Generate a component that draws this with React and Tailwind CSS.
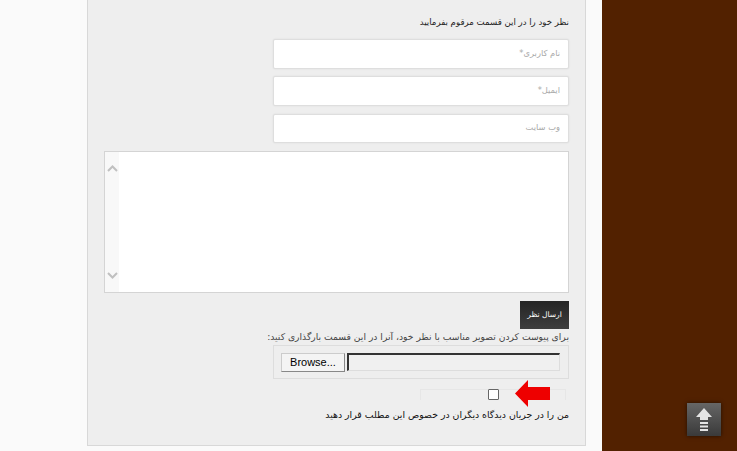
import React from "react";

function Field({ placeholder, mt, h }) {
  return (
    <input
      dir="rtl"
      placeholder={placeholder}
      className={`block ${mt} ${h} ml-auto w-[296px] bg-white border border-[#dedede] shadow-[0_0_2px_rgba(0,0,0,0.08)] rounded-[2px] px-2 pb-[3px] text-[8.3px] placeholder:text-[#aaaaaa] font-['DejaVu_Sans',sans-serif] outline-none`}
    />
  );
}

export default function App() {
  return (
    <div className="flex h-[451px] w-[737px] overflow-hidden font-['DejaVu_Sans',sans-serif]">
      <div className="w-[602px] h-full bg-[#fafafa] pl-[87px]">
        <div className="w-[499px] h-[446px] bg-[#eeeeee] border-x border-b border-[#d8d8d8] px-[16px]">
          <div dir="rtl" className="pt-[16px] h-[39px] text-[8.6px] leading-[12px] text-[#222222] whitespace-nowrap">
            نظر خود را در این قسمت مرقوم بفرمایید
          </div>
          <Field placeholder="نام کاربری*" mt="mt-0" h="h-[30px]" />
          <Field placeholder="ایمیل*" mt="mt-[7px]" h="h-[30px]" />
          <Field placeholder="وب سایت" mt="mt-[8px]" h="h-[29px]" />

          <div className="mt-[8px] flex w-[465px] h-[142px] bg-white border border-[#d4d4d4]">
            <div className="w-[14px] h-full bg-[#f8f8f8] flex flex-col items-center justify-between pt-[13px] pb-[13px]">
              <svg width="11" height="7" viewBox="0 0 11 7" fill="none" stroke="#c0c0c0" strokeWidth="2">
                <path d="M1 6 L5.5 1.5 L10 6" />
              </svg>
              <svg width="11" height="7" viewBox="0 0 11 7" fill="none" stroke="#c0c0c0" strokeWidth="2">
                <path d="M1 1 L5.5 5.5 L10 1" />
              </svg>
            </div>
          </div>

          <div className="flex justify-end mt-[8px]">
            <div className="w-[49px] h-[28px] flex items-center justify-center bg-gradient-to-b from-[#252525] to-[#3e3e3e] text-white text-[7.5px]">
              <span dir="rtl">ارسال نظر</span>
            </div>
          </div>

          <div dir="rtl" className="h-[16px] text-[9.2px] leading-[16px] text-[#444444] whitespace-nowrap">
            برای پیوست کردن تصویر مناسب با نظر خود، آنرا در این قسمت بارگذاری کنید:
          </div>

          <div className="ml-auto w-[296px] h-[34px] border border-[#dddddd] flex items-center pl-[7px] gap-[2px]">
            <div className="w-[64px] h-[19px] bg-[#f4f4f4] border border-[#888888] border-t-[#cccccc] border-l-[#cccccc] flex items-center justify-center text-[11px] text-black font-['Liberation_Sans',sans-serif]">
              Browse...
            </div>
            <div className="w-[213px] h-[18px] bg-[#f0f0f0] border-t-2 border-l-2 border-[#333333] border-r border-b border-r-[#dddddd] border-b-[#dddddd]" />
          </div>

          <div className="relative mt-[10px] ml-auto mr-[3px] w-[146px] h-[11px] border-t border-x border-[#e6e6e6] flex pl-[67px]">
            <div className="w-[11px] h-[11px] mt-[-1px] bg-white border border-[#666666] rounded-[1px]" />
            <svg className="absolute left-[94px] top-[-10px]" width="35" height="27" viewBox="0 0 35 27">
              <path d="M0 13.5 L13 0 L13 7 L35 7 L35 20 L13 20 L13 27 Z" fill="#ee0000" />
            </svg>
          </div>

          <div dir="rtl" className="mt-[8px] text-[9.35px] leading-[14px] text-[#111111] whitespace-nowrap">
            من را در جریان دیدگاه دیگران در خصوص این مطلب قرار دهید
          </div>
        </div>
      </div>

      <div className="relative flex-1 h-full bg-[#522100]">
        <div className="absolute left-[85px] top-[403px] w-[34px] h-[33px] bg-gradient-to-b from-[#666666] to-[#3a3a3a] shadow-[0_0_4px_rgba(0,0,0,0.6)] flex items-center justify-center">
          <svg width="16" height="23" viewBox="0 0 16 23">
            <path d="M8 0 L16 9 L12 9 L12 12 L4 12 L4 9 L0 9 Z" fill="#e4e4e4" />
            <rect x="4" y="14" width="8" height="2" fill="#e4e4e4" />
            <rect x="4" y="17.5" width="8" height="2" fill="#e4e4e4" />
            <rect x="4" y="21" width="8" height="2" fill="#e4e4e4" />
          </svg>
        </div>
      </div>
    </div>
  );
}
